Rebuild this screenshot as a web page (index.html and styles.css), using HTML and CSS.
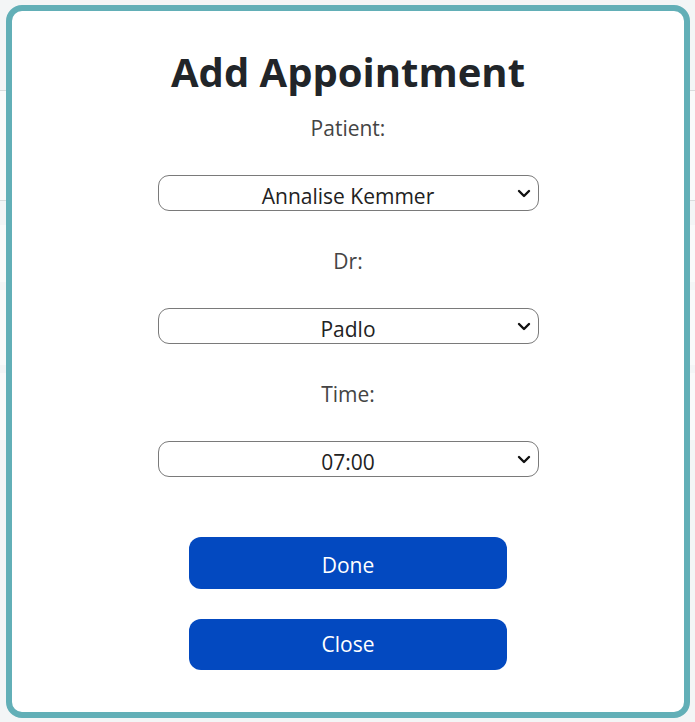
FILE: index.html
```html
<!DOCTYPE html>
<html lang="en">
<head>
<meta charset="utf-8">
<title>Add Appointment</title>
<link rel="stylesheet" href="styles.css">
</head>
<body>
<div class="page">
  <div class="bg-head"></div>
  <div class="bg-row bg-row-tall"></div>
  <div class="bg-gap"></div>
  <div class="bg-row bg-row-a"></div>
  <div class="bg-gap bg-gap-s"></div>
  <div class="bg-row bg-row-b"></div>
  <div class="bg-gap bg-gap-s"></div>
  <div class="bg-row bg-row-c"></div>
</div>

<div class="modal">
  <h1 class="title">Add Appointment</h1>
  <form class="form">
    <label class="field">
      <span class="label">Patient:</span>
      <span class="select-wrap">
        <select class="select">
          <option>Annalise Kemmer</option>
        </select>
        <svg class="chevron" width="14" height="9" viewBox="0 0 14 9"><path d="M2 2 L7 7 L12 2" fill="none" stroke="#111" stroke-width="2.4" stroke-linecap="round" stroke-linejoin="round"/></svg>
      </span>
    </label>
    <label class="field">
      <span class="label">Dr:</span>
      <span class="select-wrap">
        <select class="select">
          <option>Padlo</option>
        </select>
        <svg class="chevron" width="14" height="9" viewBox="0 0 14 9"><path d="M2 2 L7 7 L12 2" fill="none" stroke="#111" stroke-width="2.4" stroke-linecap="round" stroke-linejoin="round"/></svg>
      </span>
    </label>
    <label class="field">
      <span class="label">Time:</span>
      <span class="select-wrap">
        <select class="select">
          <option>07:00</option>
        </select>
        <svg class="chevron" width="14" height="9" viewBox="0 0 14 9"><path d="M2 2 L7 7 L12 2" fill="none" stroke="#111" stroke-width="2.4" stroke-linecap="round" stroke-linejoin="round"/></svg>
      </span>
    </label>
    <div class="actions">
      <button type="button" class="btn">Done</button>
      <button type="button" class="btn btn-close">Close</button>
    </div>
  </form>
</div>
</body>
</html>
```

FILE: styles.css
```css
* { box-sizing: border-box; }

html, body {
  margin: 0;
  padding: 0;
  height: 100%;
}

body {
  background: #f3f5f6;
  font-family: "Open Sans", "Noto Sans", sans-serif;
  overflow: hidden;
}

.page {
  display: flex;
  flex-direction: column;
}

.bg-head {
  height: 91px;
  border-bottom: 1px solid #d9dcdd;
}

.bg-row-tall {
  height: 110px;
  border-bottom: 1px solid #d9dcdd;
}

.bg-gap { height: 24px; }
.bg-gap-s { height: 8px; }

.bg-row { background: #f9fafa; }
.bg-row-a { height: 57px; }
.bg-row-b { height: 75px; }
.bg-row-c { height: 67px; }

.modal {
  position: fixed;
  top: 5px;
  left: 6px;
  width: 684px;
  height: 713px;
  background: #fff;
  border: 6px solid #62afb7;
  border-radius: 16px;
  display: flex;
  flex-direction: column;
  align-items: center;
  padding-top: 37px;
}

.title {
  margin: 0;
  font-size: 40px;
  line-height: 48px;
  font-weight: 700;
  color: #212529;
}

.form {
  display: flex;
  flex-direction: column;
  align-items: center;
  margin-top: 20px;
}

.field {
  display: flex;
  flex-direction: column;
  align-items: center;
  margin-bottom: 38px;
}

.label {
  font-size: 21px;
  line-height: 24px;
  color: #444;
}

.select-wrap {
  position: relative;
  margin-top: 35px;
  display: block;
}

.select {
  appearance: none;
  -webkit-appearance: none;
  display: block;
  width: 381px;
  height: 36px;
  border: 1px solid #7a7a7a;
  border-radius: 11px;
  background: #fff;
  font-family: inherit;
  font-size: 21px;
  color: #222;
  text-align: center;
  text-align-last: center;
  padding: 5px 24px 0;
}

.chevron {
  position: absolute;
  right: 8px;
  top: 14px;
  pointer-events: none;
}

.actions {
  display: flex;
  flex-direction: column;
  align-items: center;
  gap: 30px;
  margin-top: 22px;
}

.btn {
  width: 318px;
  height: 52px;
  border: 0;
  border-radius: 12px;
  background: #0349c0;
  color: #fff;
  font-family: inherit;
  font-size: 21px;
  padding: 3px 0 0;
}

.btn-close {
  height: 51px;
  padding: 0 0 2px;
}
```
